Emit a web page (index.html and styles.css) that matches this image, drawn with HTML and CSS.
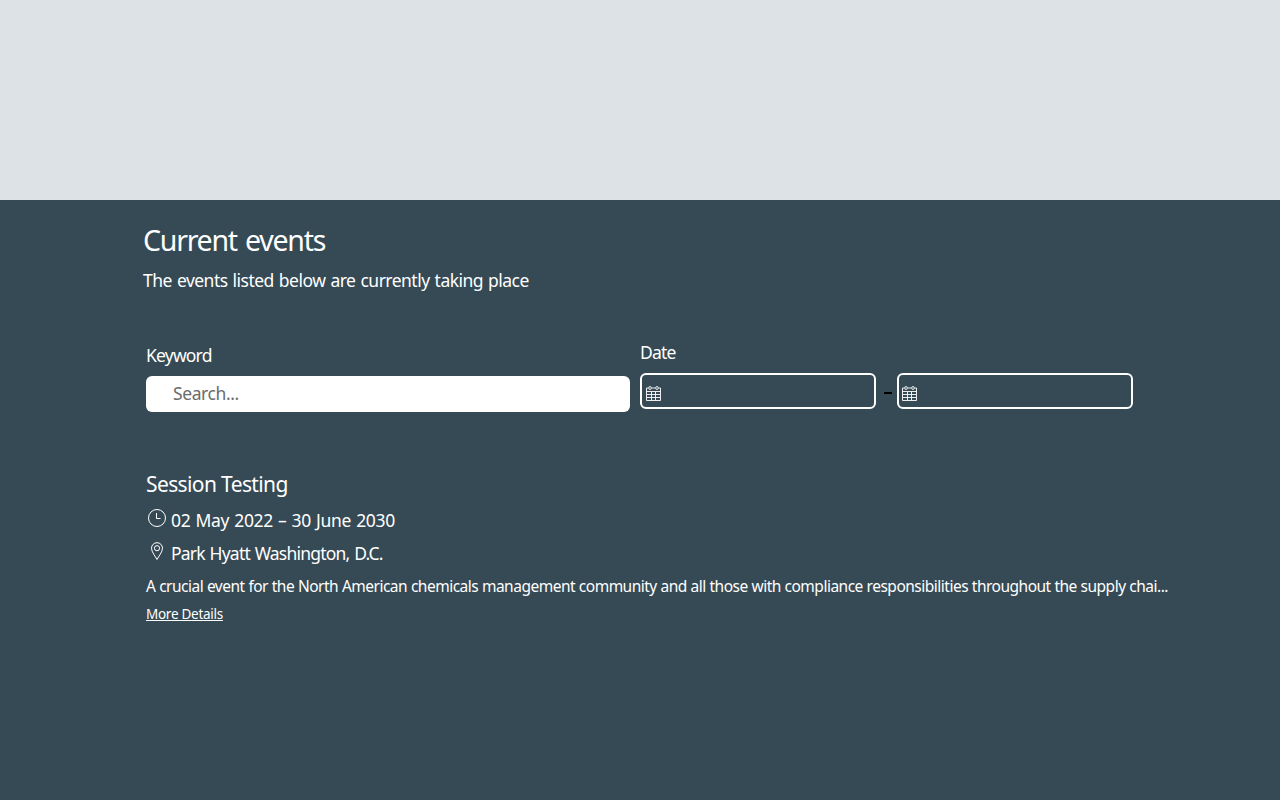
FILE: index.html
```html
<!DOCTYPE html>
<html lang="en">
<head>
    <meta charset="UTF-8">
    <meta name="viewport" content="width=device-width, initial-scale=1.0">
    <title>Current events</title>
    <link rel="stylesheet" href="styles.css">
</head>
<body>
    <div class="banner"></div>
    <main class="events">
        <header class="events-header">
            <h1>Current events</h1>
            <p>The events listed below are currently taking place</p>
        </header>

        <form class="filters">
            <div class="keyword">
                <label for="keyword">Keyword</label>
                <input type="text" id="keyword" name="keyword" placeholder="Search...">
            </div>
            <div class="date">
                <label>Date</label>
                <div class="date-range">
                    <div class="date-input date-from">
                        <svg class="calendar" viewBox="0 0 15 15" width="15" height="15">
                            <path d="M.5 2h2.5M5 2h5M12 2h2.5M.5 2v12.500h14V2M.5 5.500h14M1 8.500h13M1 11.500h13M5.500 6v8M9.500 6v8"/>
                            <rect x="3" y=".5" width="2" height="3" rx=".8"/>
                            <rect x="10" y=".5" width="2" height="3" rx=".8"/>
                        </svg>
                    </div>
                    <span class="dash"></span>
                    <div class="date-input">
                        <svg class="calendar" viewBox="0 0 15 15" width="15" height="15">
                            <path d="M.5 2h2.5M5 2h5M12 2h2.5M.5 2v12.500h14V2M.5 5.500h14M1 8.500h13M1 11.500h13M5.500 6v8M9.500 6v8"/>
                            <rect x="3" y=".5" width="2" height="3" rx=".8"/>
                            <rect x="10" y=".5" width="2" height="3" rx=".8"/>
                        </svg>
                    </div>
                </div>
            </div>
        </form>

        <article class="event">
            <h2>Session Testing</h2>
            <div class="event-row">
                <svg viewBox="0 0 22 22" width="22" height="22">
                    <circle cx="11" cy="11" r="8.5"/>
                    <path d="M10.5 6v5.5h4"/>
                </svg>
                <span class="event-date">02 May 2022 – 30 June 2030</span>
            </div>
            <div class="event-row">
                <svg viewBox="0 0 22 22" width="22" height="22">
                    <path d="M11 19.5C9.5 16.5 5.5 12 5.5 8.2a5.5 5.5 0 0 1 11 0c0 3.8-4 8.3-5.5 11.3z"/>
                    <circle cx="11" cy="8.2" r="2.6"/>
                </svg>
                <span class="event-place">Park Hyatt Washington, D.C.</span>
            </div>
            <p>A crucial event for the North American chemicals management community and all those with compliance responsibilities throughout the supply chai...</p>
            <a href="#">More Details</a>
        </article>
    </main>
</body>
</html>
```
FILE: styles.css
```css
* {
    box-sizing: border-box;
}
body {
    margin: 0;
    background: #364a55;
    color: #fff;
    font-family: 'Noto Sans', 'Open Sans', sans-serif;
    font-size: 17.5px;
    overflow: hidden;
}
h1, h2, p {
    margin: 0;
    font-weight: 400;
    white-space: nowrap;
}
.banner {
    height: 200px;
    background: #dde2e6;
}
.events-header {
    height: 132px;
    padding: 20px 0 0 143px;
}
.events-header h1 {
    font-size: 28.5px;
    line-height: 40px;
    letter-spacing: -1.25px;
    word-spacing: 2px;
}
.events-header p {
    margin-top: 7px;
    line-height: 26px;
    letter-spacing: -0.52px;
    word-spacing: 1px;
}
.filters {
    display: flex;
    gap: 10px;
    padding-left: 146px;
}
.keyword {
    width: 484px;
    padding-top: 11px;
}
.date {
    width: 493px;
    padding-top: 8px;
}
.filters label {
    display: block;
    height: 33px;
    line-height: 24px;
    letter-spacing: -0.8px;
}
.keyword input {
    display: block;
    width: 100%;
    height: 36px;
    padding: 0 27px 2px;
    border: none;
    border-radius: 6px;
    background: #fff;
    font: inherit;
    letter-spacing: -0.4px;
}
.keyword input::placeholder {
    color: #6b6b6b;
}
.date-range {
    display: flex;
    align-items: center;
}
.date-input {
    width: 236px;
    height: 36px;
    padding: 11px 0 0 3px;
    border: 2px solid #fff;
    border-radius: 6px;
}
.date-from {
    padding-left: 4px;
}
.dash {
    width: 8px;
    height: 2px;
    margin: 3px 5px 0 8px;
    background: #000;
}
svg {
    display: block;
    fill: none;
    stroke: #fff;
}
.calendar {
    stroke-width: 0.9;
}
.event {
    padding: 57px 0 0 146px;
}
.event h2 {
    font-size: 21px;
    line-height: 30px;
    letter-spacing: -0.62px;
}
.event-row {
    display: flex;
    gap: 3px;
    height: 33px;
    padding-top: 8px;
}
.event-row span {
    margin-top: 1px;
    line-height: 24px;
    white-space: nowrap;
}
.event-date {
    letter-spacing: -0.33px;
    word-spacing: 0.9px;
}
.event-place {
    letter-spacing: -0.78px;
    word-spacing: 0.9px;
}
.event p {
    margin-top: 9px;
    font-size: 15.5px;
    line-height: 24px;
    letter-spacing: -0.5px;
    word-spacing: 0.21px;
}
.event a {
    display: inline-block;
    margin-top: 4px;
    color: #fff;
    font-size: 13.5px;
    line-height: 24px;
    letter-spacing: -0.27px;
}
```
